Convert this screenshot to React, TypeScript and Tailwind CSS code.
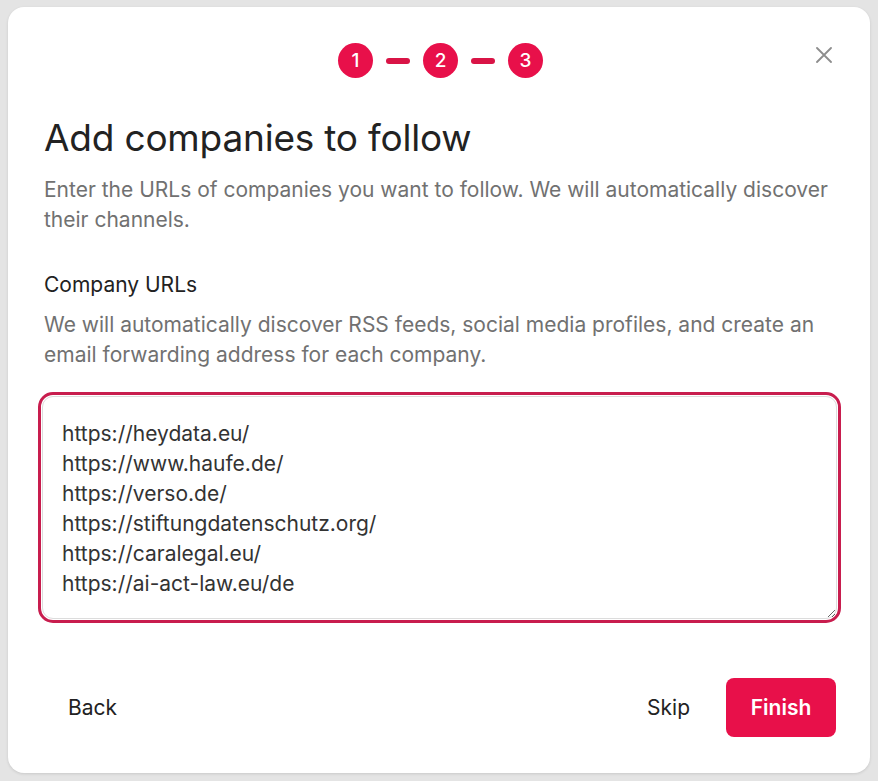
import React, { useEffect, useRef } from "react";

const urls = [
  "https://heydata.eu/",
  "https://www.haufe.de/",
  "https://verso.de/",
  "https://stiftungdatenschutz.org/",
  "https://caralegal.eu/",
  "https://ai-act-law.eu/de",
].join("\n");

function Step({ n }: { n: number }) {
  return (
    <div className="flex h-[35px] w-[35px] items-center justify-center rounded-full bg-[#e8104a] text-[19px] font-medium leading-none text-white">
      {n}
    </div>
  );
}

function Dash() {
  return <div className="h-[6px] w-[24px] rounded-full bg-[#d91446]" />;
}

export default function App() {
  const ref = useRef<HTMLTextAreaElement>(null);
  useEffect(() => {
    const el = ref.current;
    if (el) {
      el.focus();
      el.setSelectionRange(el.value.length, el.value.length);
    }
  }, []);

  return (
    <div
      className="min-h-[781px] bg-[#e4e4e4] px-[8px] py-[7px]"
      style={{ fontFamily: "Inter, 'Noto Sans', sans-serif" }}
    >
      <div className="relative h-[766px] rounded-[16px] bg-white pl-[36px] pr-[34px] pt-[36px] shadow-[0_1px_3px_rgba(0,0,0,0.12)]">
        <button className="absolute right-[38px] top-[40px] flex h-[16px] w-[16px] items-center justify-center text-[#8d8d8d]">
          <svg width="16" height="16" viewBox="0 0 16 16" fill="none" stroke="currentColor" strokeWidth="1.8" strokeLinecap="round">
            <path d="M1 1L15 15M15 1L1 15" />
          </svg>
        </button>

        <div className="flex items-center justify-center gap-[13px] pl-[1px]">
          <Step n={1} />
          <Dash />
          <Step n={2} />
          <Dash />
          <Step n={3} />
        </div>

        <h1 className="mt-[40px] text-[37px] font-normal leading-[40px] tracking-[-0.2px] text-[#222222]">
          Add companies to follow
        </h1>
        <p className="mt-[17px] text-[21px] leading-[30px] text-[#717171]">
          Enter the URLs of companies you want to follow. We will automatically discover their channels.
        </p>

        <div className="mt-[36px] text-[21px] leading-[28px] text-[#222222]">Company URLs</div>
        <p className="mt-[11px] text-[21px] leading-[30px] text-[#717171]">
          We will automatically discover RSS feeds, social media profiles, and create an email forwarding address for each company.
        </p>

        <div className="-ml-[6px] -mr-[5px] mt-[22px] rounded-[15px] border-[3px] border-[#c81d4e] p-[1px]">
          <textarea
            ref={ref}
            rows={6}
            defaultValue={urls}
            className="block h-[223px] w-full rounded-[11px] border border-[#dcdcdc] bg-white pl-[19px] pr-[18px] pb-[14px] pt-[22px] text-[21px] leading-[30px] text-[#333333] caret-[#222] outline-none"
            style={{ fontFamily: "Inter, 'Noto Sans', sans-serif" }}
          />
        </div>

        <div className="mt-[55px] flex items-center justify-between">
          <button className="h-[58px] rounded-[8px] px-[24px] text-[21px] font-normal text-[#222222]">Back</button>
          <div className="flex items-center gap-[12px]">
            <button className="h-[58px] rounded-[8px] px-[24px] text-[21px] font-normal text-[#222222]">Skip</button>
            <button className="h-[59px] w-[110px] rounded-[8px] bg-[#e8104a] text-[21px] font-semibold text-white">Finish</button>
          </div>
        </div>
      </div>
    </div>
  );
}
